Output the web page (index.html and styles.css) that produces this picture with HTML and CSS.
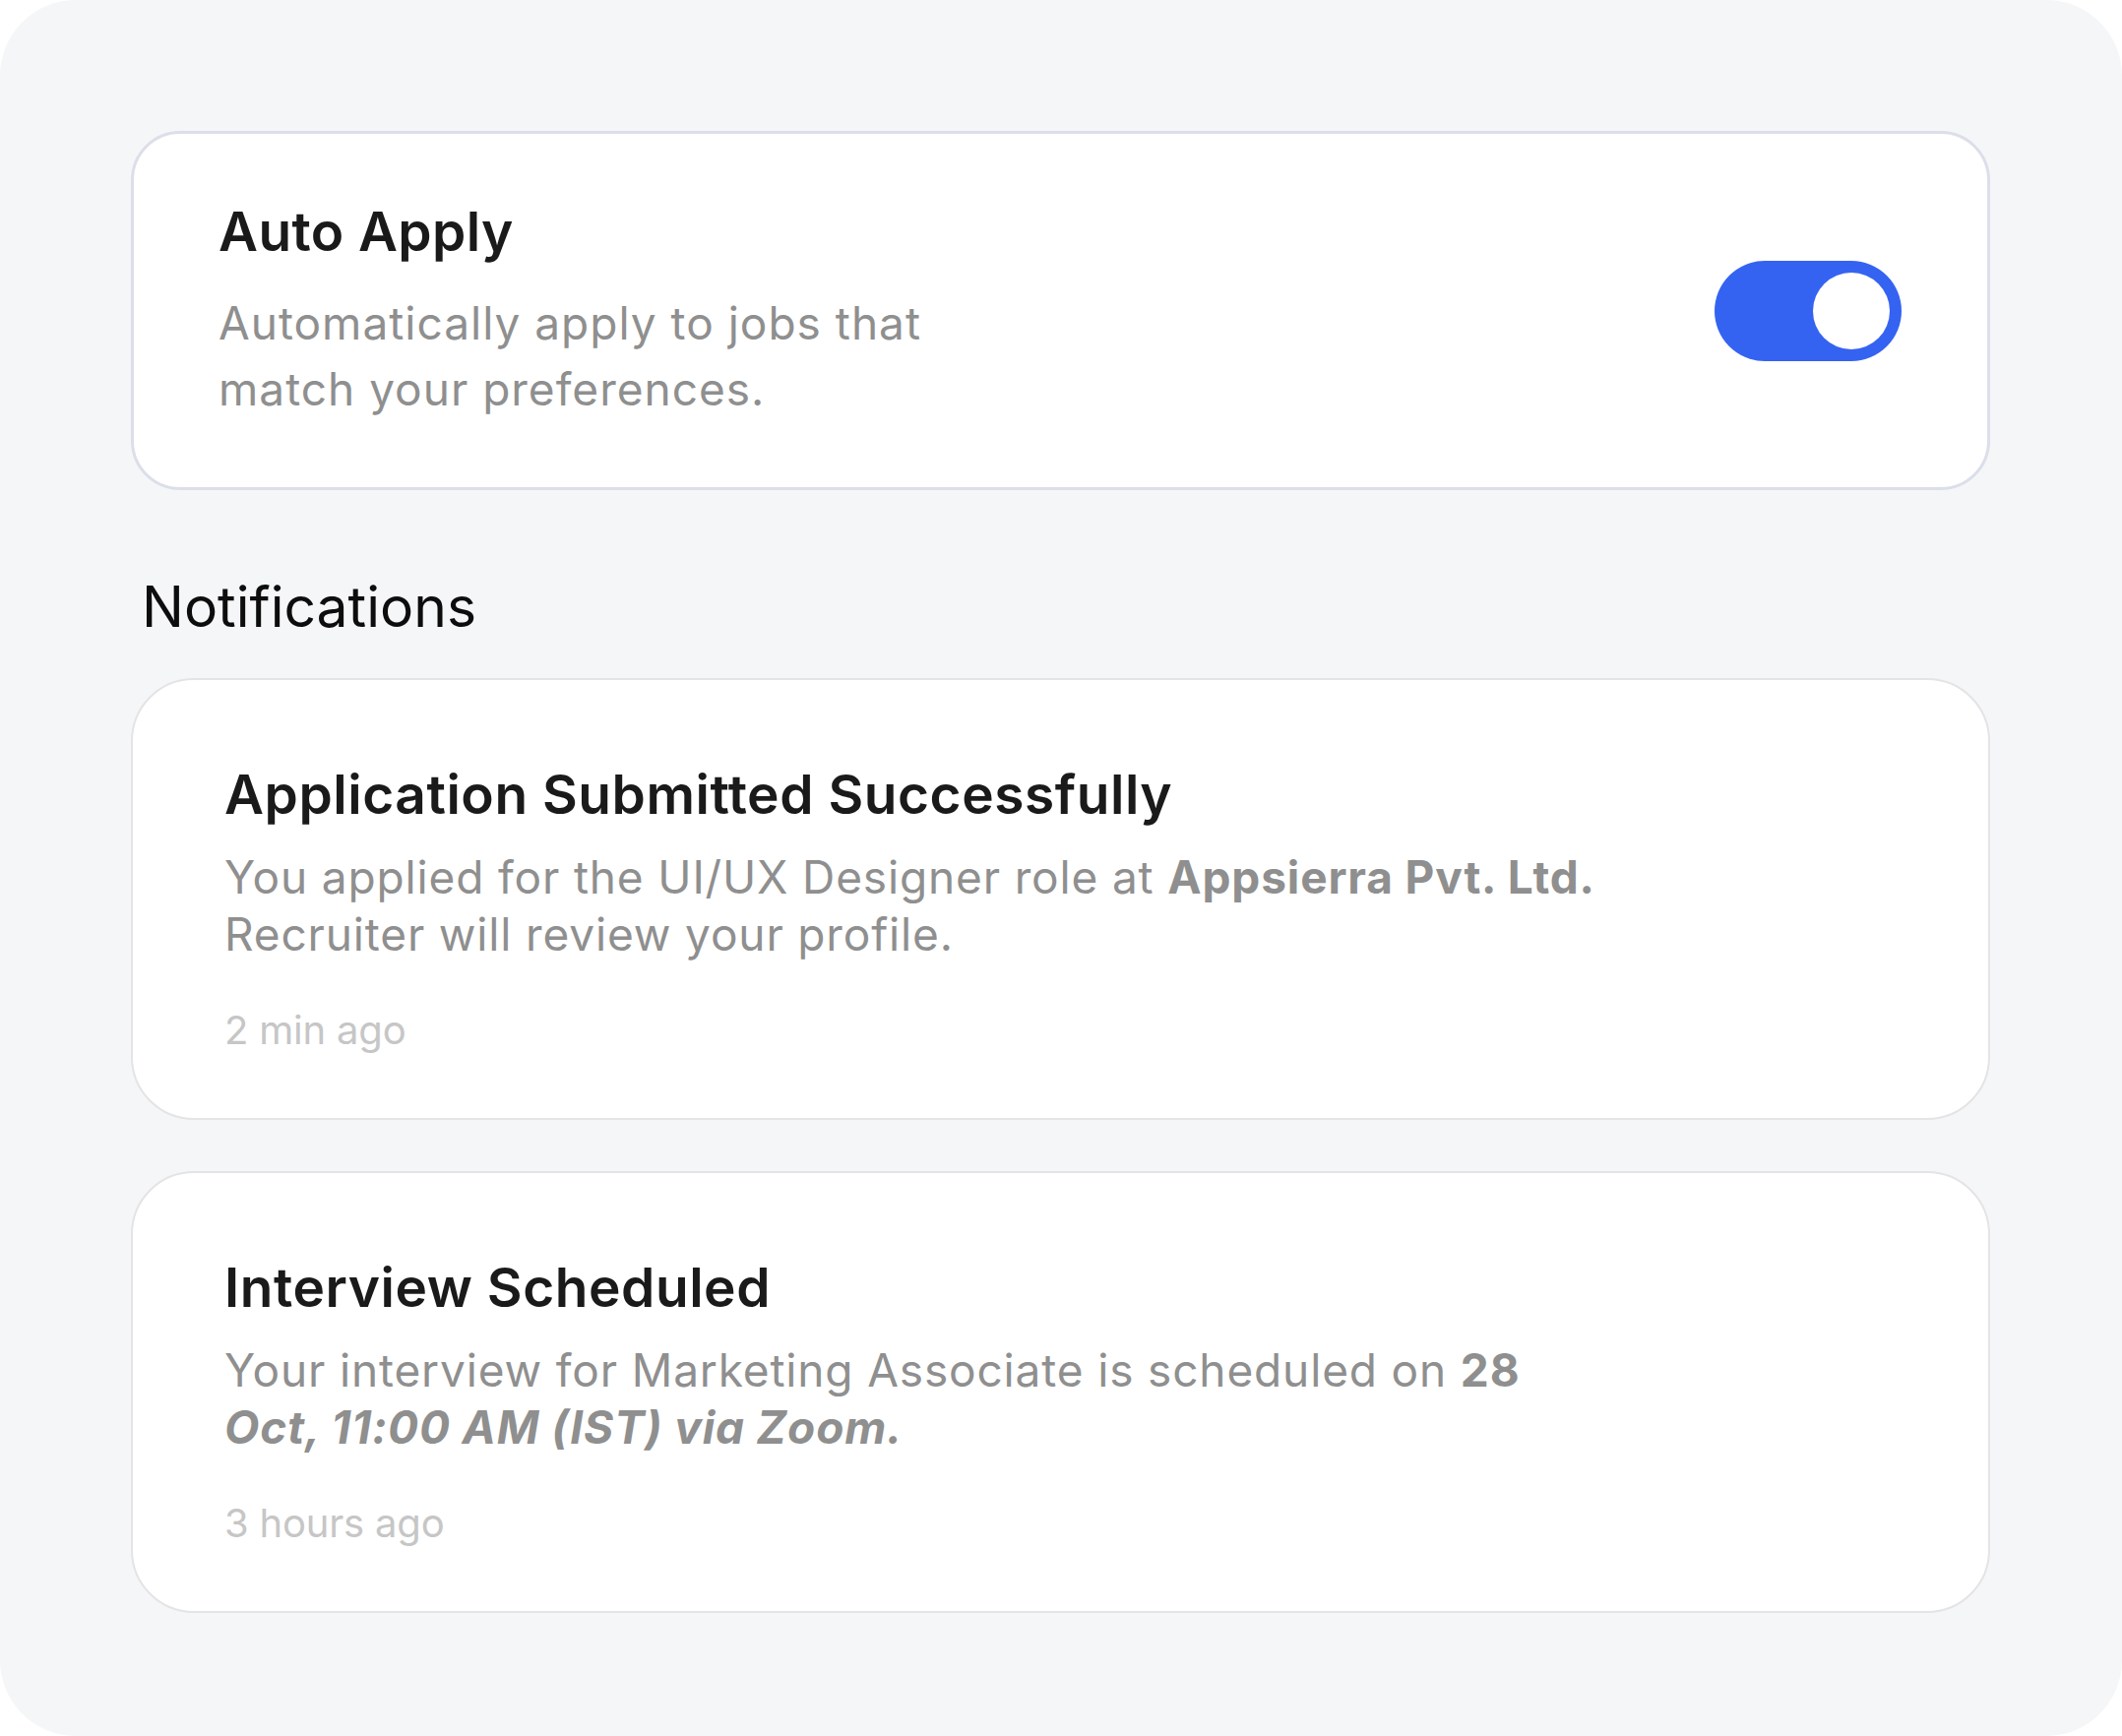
FILE: index.html
```html
<!DOCTYPE html>
<html lang="en">
<head>
<meta charset="utf-8">
<title>Settings</title>
<link rel="stylesheet" href="styles.css">
</head>
<body>
<main class="frame">
  <section class="card auto">
    <div class="auto-text">
      <h2 class="auto-title">Auto Apply</h2>
      <p class="auto-desc">Automatically apply to jobs that match your preferences.</p>
    </div>
    <div class="toggle" role="switch" aria-checked="true"><span class="knob"></span></div>
  </section>

  <h1 class="section-title">Notifications</h1>

  <div class="notif-list">
    <article class="card notif">
      <h3 class="notif-title">Application Submitted Successfully</h3>
      <p class="notif-body">You applied for the UI/UX Designer role at <b>Appsierra Pvt. Ltd.</b><br>Recruiter will review your profile.</p>
      <p class="notif-time">2 min ago</p>
    </article>
    <article class="card notif">
      <h3 class="notif-title">Interview Scheduled</h3>
      <p class="notif-body">Your interview for Marketing Associate is scheduled on <b>28</b><br><b><i>Oct, 11:00 AM (IST) via Zoom.</i></b></p>
      <p class="notif-time">3 hours ago</p>
    </article>
  </div>
</main>
</body>
</html>
```
FILE: styles.css
```css
* { box-sizing: border-box; }
html, body { margin: 0; padding: 0; background: #ffffff; }
body { font-family: Inter, "Noto Sans", "Liberation Sans", sans-serif; }

.frame {
  width: 2156px;
  height: 1764px;
  background: #f5f6f8;
  border-radius: 77px;
  padding: 133px 134px 0 133px;
  display: flex;
  flex-direction: column;
}

.card {
  background: #ffffff;
  border: 2px solid #e4e4e6;
}

.auto {
  border: 3px solid #dcdee9;
  border-radius: 50px;
  height: 365px;
  padding: 0 87px 0 86px;
  display: flex;
  align-items: center;
  justify-content: space-between;
}
.auto-title {
  margin: 0;
  font-size: 55px;
  line-height: 66px;
  font-weight: 600;
  letter-spacing: 0.4px;
  color: #1a1a1a;
}
.auto-desc {
  margin: 27px 0 0;
  max-width: 800px;
  font-size: 46px;
  line-height: 67px;
  letter-spacing: 1px;
  color: #8f8f8f;
}

.toggle {
  width: 190px;
  height: 102px;
  border-radius: 51px;
  background: #3563f1;
  padding: 12px;
  display: flex;
  justify-content: flex-end;
  align-items: center;
}
.knob {
  width: 78px;
  height: 78px;
  border-radius: 50%;
  background: #ffffff;
}

.section-title {
  margin: 86px 0 39px 11px;
  font-size: 57px;
  line-height: 66px;
  font-weight: 400;
  color: #0d0d0d;
}

.notif-list {
  display: flex;
  flex-direction: column;
  gap: 52px;
}
.notif {
  border-radius: 64px;
  height: 449px;
  padding: 83px 96px 0 93px;
}
.notif-title {
  margin: 0;
  font-size: 55px;
  line-height: 66px;
  font-weight: 600;
  letter-spacing: 0.55px;
  color: #1a1a1a;
}
.notif-body {
  margin: 22px 0 0;
  font-size: 46px;
  line-height: 58px;
  letter-spacing: 0.85px;
  color: #8f8f8f;
}
.notif-body b { font-weight: 700; }
.notif-time {
  margin: 45px 0 0;
  font-size: 40px;
  line-height: 48px;
  letter-spacing: -0.2px;
  color: #c6c6c6;
}
```
